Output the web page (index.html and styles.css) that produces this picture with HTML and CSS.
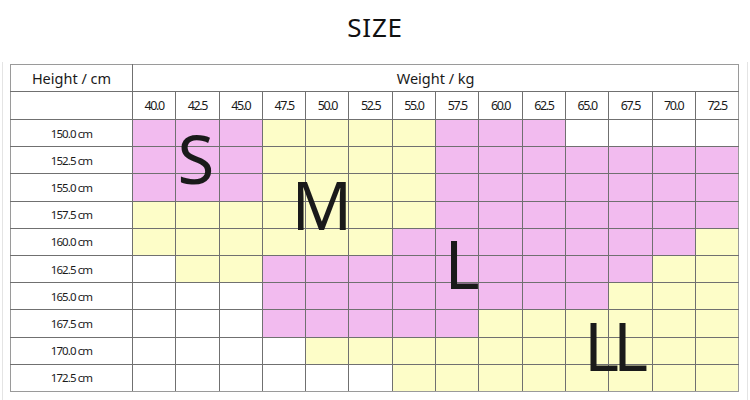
FILE: index.html
```html
<!DOCTYPE html>
<html>
<head>
<meta charset="utf-8">
<link rel="stylesheet" href="styles.css">
</head>
<body>
<h1 class="title">SIZE</h1>
<div class="frame">
  <div class="chart">
    <table class="grid">
      <colgroup>
        <col class="c-h">
        <col><col><col><col><col><col><col><col><col><col><col><col><col><col>
      </colgroup>
      <tr class="r-top">
        <th class="lab">Height / cm</th>
        <th class="lab" colspan="14">Weight / kg</th>
      </tr>
      <tr class="r-w">
        <th></th>
        <th>40.0</th><th>42.5</th><th>45.0</th><th>47.5</th><th>50.0</th><th>52.5</th><th>55.0</th><th>57.5</th><th>60.0</th><th>62.5</th><th>65.0</th><th>67.5</th><th>70.0</th><th>72.5</th>
      </tr>
      <tr><th class="h">150.0 cm</th><td class="p"></td><td class="p"></td><td class="p"></td><td class="y"></td><td class="y"></td><td class="y"></td><td class="y"></td><td class="p"></td><td class="p"></td><td class="p"></td><td></td><td></td><td></td><td></td></tr>
      <tr><th class="h">152.5 cm</th><td class="p"></td><td class="p"></td><td class="p"></td><td class="y"></td><td class="y"></td><td class="y"></td><td class="y"></td><td class="p"></td><td class="p"></td><td class="p"></td><td class="p"></td><td class="p"></td><td class="p"></td><td class="p"></td></tr>
      <tr><th class="h">155.0 cm</th><td class="p"></td><td class="p"></td><td class="p"></td><td class="y"></td><td class="y"></td><td class="y"></td><td class="y"></td><td class="p"></td><td class="p"></td><td class="p"></td><td class="p"></td><td class="p"></td><td class="p"></td><td class="p"></td></tr>
      <tr><th class="h">157.5 cm</th><td class="y"></td><td class="y"></td><td class="y"></td><td class="y"></td><td class="y"></td><td class="y"></td><td class="y"></td><td class="p"></td><td class="p"></td><td class="p"></td><td class="p"></td><td class="p"></td><td class="p"></td><td class="p"></td></tr>
      <tr><th class="h">160.0 cm</th><td class="y"></td><td class="y"></td><td class="y"></td><td class="y"></td><td class="y"></td><td class="y"></td><td class="p"></td><td class="p"></td><td class="p"></td><td class="p"></td><td class="p"></td><td class="p"></td><td class="p"></td><td class="y"></td></tr>
      <tr><th class="h">162.5 cm</th><td></td><td class="y"></td><td class="y"></td><td class="p"></td><td class="p"></td><td class="p"></td><td class="p"></td><td class="p"></td><td class="p"></td><td class="p"></td><td class="p"></td><td class="p"></td><td class="y"></td><td class="y"></td></tr>
      <tr><th class="h">165.0 cm</th><td></td><td></td><td></td><td class="p"></td><td class="p"></td><td class="p"></td><td class="p"></td><td class="p"></td><td class="p"></td><td class="p"></td><td class="p"></td><td class="y"></td><td class="y"></td><td class="y"></td></tr>
      <tr><th class="h">167.5 cm</th><td></td><td></td><td></td><td class="p"></td><td class="p"></td><td class="p"></td><td class="p"></td><td class="p"></td><td class="y"></td><td class="y"></td><td class="y"></td><td class="y"></td><td class="y"></td><td class="y"></td></tr>
      <tr><th class="h">170.0 cm</th><td></td><td></td><td></td><td></td><td class="y"></td><td class="y"></td><td class="y"></td><td class="y"></td><td class="y"></td><td class="y"></td><td class="y"></td><td class="y"></td><td class="y"></td><td class="y"></td></tr>
      <tr><th class="h">172.5 cm</th><td></td><td></td><td></td><td></td><td></td><td></td><td class="y"></td><td class="y"></td><td class="y"></td><td class="y"></td><td class="y"></td><td class="y"></td><td class="y"></td><td class="y"></td></tr>
    </table>
    <span class="big big-s">S</span>
    <span class="big big-m">M</span>
    <span class="big big-l">L</span>
    <span class="big big-ll">LL</span>
  </div>
</div>
</body>
</html>
```
FILE: styles.css
```css
html, body {
  margin: 0;
  padding: 0;
  background: #ffffff;
}

body {
  width: 750px;
  height: 400px;
  overflow: hidden;
  font-family: "Noto Sans", "Open Sans", sans-serif;
  color: #1a1a1a;
}

.title {
  margin: 0;
  height: 55px;
  line-height: 55px;
  font-size: 26px;
  font-weight: 400;
  letter-spacing: 0.8px;
  text-align: center;
  color: #111;
}

.frame {
  margin: 7px 2px 0 2px;
  height: 340px;
  border-left: 1px solid #e4e4e4;
  border-right: 1px solid #e4e4e4;
  padding: 2px 0 0 7px;
}

.chart {
  position: relative;
  width: 729px;
}

.grid {
  border-collapse: collapse;
  table-layout: fixed;
  width: 729px;
  border: 1px solid #9a9a9a;
}

.grid col {
  width: 43.3px;
}

.grid col.c-h {
  width: 122px;
}

.grid th,
.grid td {
  border: 1px solid #707070;
  padding: 0;
  font-weight: 400;
  text-align: center;
  vertical-align: middle;
}

.grid tr:first-child th { border-top-color: #9a9a9a; }
.grid tr > :first-child { border-left-color: #9a9a9a; }
.grid tr > :last-child { border-right-color: #9a9a9a; }
.grid tr:last-child > * { border-bottom-color: #9a9a9a; }

.grid tr {
  height: 27.2px;
}

.grid tr.r-top {
  height: 27px;
}

.grid tr.r-w {
  height: 28px;
}

.lab {
  font-size: 14.5px;
  color: #1a1a1a;
}

.r-w th {
  font-size: 12.5px;
  letter-spacing: -1.4px;
  color: #1a1a1a;
}

.h {
  font-size: 11.5px;
  letter-spacing: -0.9px;
  color: #1a1a1a;
  padding-left: 6px;
}

.p {
  background: #f2bbef;
}

.y {
  background: #fdfdc8;
}

.big {
  position: absolute;
  width: 100px;
  text-align: center;
  font-size: 67px;
  line-height: 0.75;
  color: #1a1a1a;
}

.big-s { left: 136px; top: 69px; }
.big-m { left: 262px; top: 115px; }
.big-l { left: 402px; top: 174px; }
.big-ll { left: 553px; top: 256px; letter-spacing: -6px; }
```
